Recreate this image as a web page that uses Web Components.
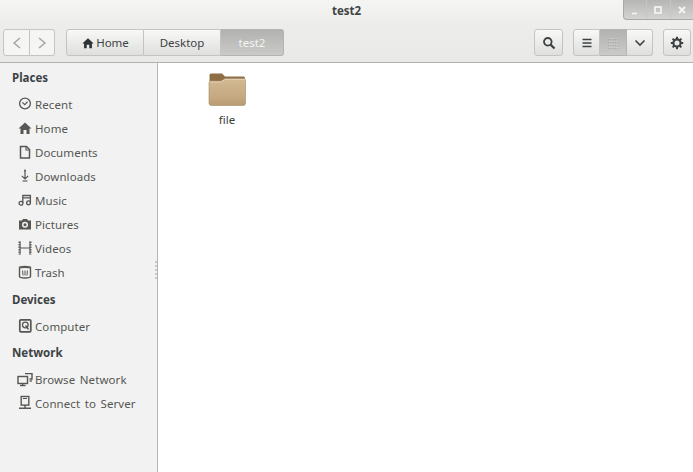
<!DOCTYPE html>
<html>
<head>
<meta charset="utf-8">
<title>test2</title>
<style>
html, body { margin: 0; padding: 0; height: 100%; background: #fff; }
body { font: 12px "Noto Sans", sans-serif; color: #2e3436; overflow: hidden; }
</style>
</head>
<body>
<files-window></files-window>
<script>
const ICONS = {
    recent: `<circle cx="8" cy="7.5" r="5.4" fill="none" stroke="currentColor" stroke-width="1.3"/><path d="M5.4 6.4 L7.8 8.6 L10.6 5.6" fill="none" stroke="currentColor" stroke-width="1.2"/>`,
    home: `<path d="M8 2.5 L14.5 8.5 H12.5 V14 H9.5 V10 H6.5 V14 H3.5 V8.5 H1.5 Z"/>`,
    documents: `<path d="M3.5 2.5 H9.5 L12.5 5.5 V14 H3.5 Z" fill="none" stroke="currentColor" stroke-width="1.5"/><path d="M9 2.5 V6 H12.5" fill="none" stroke="currentColor" stroke-width="1.1"/>`,
    downloads: `<path d="M8 3 V10 M4.8 7.8 L8 11 L11.2 7.8" fill="none" stroke="currentColor" stroke-width="1.2"/><path d="M5.5 13 H10.5" stroke="currentColor" stroke-width="1.1"/><circle cx="8" cy="2.4" r="1"/>`,
    music: `<path d="M5.8 11 V3.5 H13.4 V10.5 M5.8 5.8 H13.4" fill="none" stroke="currentColor" stroke-width="1.3"/><circle cx="4" cy="11.2" r="1.9" fill="none" stroke="currentColor" stroke-width="1.3"/><circle cx="11.5" cy="10.8" r="1.9" fill="none" stroke="currentColor" stroke-width="1.3"/>`,
    pictures: `<path fill-rule="evenodd" d="M2 4.5 H5 L6 3 H10 L11 4.5 H14 V13.5 H2 Z M8 5.8 A3 3 0 1 0 8 11.8 A3 3 0 1 0 8 5.8 Z"/><circle cx="8" cy="8.8" r="1.5"/>`,
    videos: `<path d="M3 1.5 V14.5 M13 1.5 V14.5 M3 8 H13" fill="none" stroke="currentColor" stroke-width="1.1"/><path d="M2.5 1.5 V14.5 M13.5 1.5 V14.5" stroke="currentColor" stroke-width="2.4" stroke-dasharray="1.5 1" opacity=".7"/>`,
    trash: `<path d="M2.5 4.6 C2.5 3 13.5 3 13.5 4.6 V12.5 C13.5 14.4 2.5 14.4 2.5 12.5 Z" fill="none" stroke="currentColor" stroke-width="1.4"/><path d="M2 3.6 C3 2 13 2 14 3.6" fill="none" stroke="currentColor" stroke-width="1.4"/><path d="M5.6 6.5 L6 11.5 M8 6.5 V11.5 M10.4 6.5 L10 11.5" stroke="currentColor" stroke-width="1"/>`,
    computer: `<rect x="2.8" y="1.8" width="11" height="12" rx="1" fill="none" stroke="currentColor" stroke-width="1.7"/><circle cx="8.3" cy="7" r="2.8" fill="none" stroke="currentColor" stroke-width="1.3"/><path d="M8.5 7.5 L11.5 11.5" stroke="currentColor" stroke-width="1.3"/>`,
    network: `<rect x="1" y="5.5" width="9.5" height="7" fill="none" stroke="currentColor" stroke-width="1.4"/><path d="M3 14.5 H8.5 M5.7 12.5 V14.5" stroke="currentColor" stroke-width="1.3"/><path d="M8 2.6 H15 V8 H12.5" fill="none" stroke="currentColor" stroke-width="1.4"/><path d="M12.5 10 H15" stroke="currentColor" stroke-width="1.3"/>`,
    server: `<rect x="4.2" y="1.5" width="7.6" height="8.6" fill="none" stroke="currentColor" stroke-width="1.4"/><path d="M8 10.1 V12.5 M2 13.2 H14" stroke="currentColor" stroke-width="1.4"/><path d="M6 3.5 H10" stroke="currentColor" stroke-width="1"/>`
};

class ToolButton extends HTMLElement {
    constructor() {
        super();
        this.attachShadow({ mode: "open" });
        this.shadowRoot.innerHTML = `
        <style>
            :host {
                display: flex;
                align-items: center;
                justify-content: center;
                box-sizing: border-box;
                height: 27px;
                width: var(--w, 28px);
                color: #3d4345;
                font: 11.5px "Noto Sans", sans-serif;
                background: linear-gradient(#f8f8f7, #dfdfdd);
                border: 1px solid #c4c4c1;
                border-left-width: var(--bl, 1px);
                border-radius: var(--r, 3px);
                gap: 1px;
            }
            :host([active]) {
                background: linear-gradient(#b2b3b0, #cacbc8);
                color: #f4f4f3;
                border-color: #b4b4b1;
            }
            :host([flat]) { background: #f5f5f4; color: #a3a5a5; }
        </style>
        <slot></slot>`;
    }
}

class NavItem extends HTMLElement {
    constructor() {
        super();
        this.attachShadow({ mode: "open" });
        const icon = ICONS[this.getAttribute("icon")] || "";
        this.shadowRoot.innerHTML = `
        <style>
            :host {
                display: flex;
                align-items: center;
                height: 24px;
                padding-left: 17px;
                gap: 2px;
                color: #555753;
                font: 11.5px "Noto Sans", sans-serif;
                letter-spacing: .08px;
                word-spacing: 1.5px;
            }
            svg { width: 16px; height: 16px; fill: currentColor; flex: none; }
        </style>
        <svg viewBox="0 0 16 16">${icon}</svg>
        <slot></slot>`;
    }
}

class NavHeading extends HTMLElement {
    constructor() {
        super();
        this.attachShadow({ mode: "open" });
        this.shadowRoot.innerHTML = `
        <style>
            :host {
                display: flex;
                align-items: center;
                height: 24px;
                padding-left: 12px;
                margin-bottom: 3px;
                color: #3d4345;
                font: 700 11.5px "Noto Sans", sans-serif;
            }
        </style>
        <slot></slot>`;
    }
}

class PlacesSidebar extends HTMLElement {
    constructor() {
        super();
        this.attachShadow({ mode: "open" });
        this.shadowRoot.innerHTML = `
        <style>
            :host {
                display: flex;
                flex-direction: column;
                position: relative;
                box-sizing: border-box;
                width: 158px;
                flex: none;
                padding-top: 2px;
                background: #f2f2f2;
                border-right: 1px solid #b6b6b3;
            }
            .devices { margin-top: 3px; }
            .network { margin-top: 2px; }
            .grip {
                position: absolute;
                right: 0;
                top: 198px;
                width: 2px;
                height: 20px;
                background: repeating-linear-gradient(#c9c9c7 0 2px, transparent 2px 4px);
            }
        </style>
        <nav-heading>Places</nav-heading>
        <nav-item icon="recent">Recent</nav-item>
        <nav-item icon="home">Home</nav-item>
        <nav-item icon="documents">Documents</nav-item>
        <nav-item icon="downloads">Downloads</nav-item>
        <nav-item icon="music">Music</nav-item>
        <nav-item icon="pictures">Pictures</nav-item>
        <nav-item icon="videos">Videos</nav-item>
        <nav-item icon="trash">Trash</nav-item>
        <nav-heading class="devices">Devices</nav-heading>
        <nav-item icon="computer">Computer</nav-item>
        <nav-heading class="network">Network</nav-heading>
        <nav-item icon="network">Browse Network</nav-item>
        <nav-item icon="server">Connect to Server</nav-item>
        <div class="grip"></div>`;
    }
}

class FileIcon extends HTMLElement {
    constructor() {
        super();
        this.attachShadow({ mode: "open" });
        this.shadowRoot.innerHTML = `
        <style>
            :host {
                display: flex;
                flex-direction: column;
                align-items: center;
                width: 100px;
                color: #3b3f40;
                font: 11.5px "Noto Sans", sans-serif;
            }
            svg { width: 38px; height: 34px; display: block; }
            .name { margin-top: 6px; line-height: 16px; }
        </style>
        <svg viewBox="0 0 38 34">
            <defs>
                <linearGradient id="front" x1="0" y1="0" x2="0" y2="1">
                    <stop offset="0" stop-color="#d2ba94"/>
                    <stop offset=".7" stop-color="#c4a880"/>
                    <stop offset="1" stop-color="#b89b72"/>
                </linearGradient>
            </defs>
            <path d="M1.5 32 V3 Q1.5 1.5 3 1.5 H14 L17 4.5 H35.5 Q37 4.5 37 6 V32 Z" fill="#8f6e46"/>
            <path d="M1 10.5 Q1 9 2.5 9 H13 L17 6.5 H35.5 Q37.5 6.5 37.5 8.5 V31 Q37.5 33.5 35 33.5 H3.5 Q1 33.5 1 31 Z" fill="url(#front)" stroke="#a58a63" stroke-width=".6"/>
            <path d="M1.5 10 H13 L17 7.4 H37" fill="none" stroke="#e6d7bc" stroke-width=".8"/>
        </svg>
        <div class="name"><slot></slot></div>`;
    }
}

class WindowControls extends HTMLElement {
    constructor() {
        super();
        this.attachShadow({ mode: "open" });
        this.shadowRoot.innerHTML = `
        <style>
            :host {
                position: absolute;
                top: 0;
                right: 0;
                width: 70px;
                height: 20px;
                display: flex;
                box-sizing: border-box;
                background: linear-gradient(#b5b5b3, #d4d4d2);
                border-bottom: 1px solid #a9a9a7;
                border-left: 1px solid #a9a9a7;
                border-radius: 0 0 0 4px;
            }
            div { flex: 1; display: flex; align-items: center; justify-content: center; border-right: 1px solid #c4c4c2; }
            div:last-child { border-right: 0; }
            svg { width: 10px; height: 10px; }
        </style>
        <div><svg viewBox="0 0 10 10"><path d="M2 8.5 H7" stroke="#f4f4f3" stroke-width="1.6"/></svg></div>
        <div><svg viewBox="0 0 10 10"><rect x="2" y="2" width="6" height="6" fill="none" stroke="#f4f4f3" stroke-width="1.7"/></svg></div>
        <div><svg viewBox="0 0 10 10"><path d="M2 2 L8 8 M8 2 L2 8" stroke="#f4f4f3" stroke-width="2"/></svg></div>`;
    }
}

class HeaderBar extends HTMLElement {
    constructor() {
        super();
        this.attachShadow({ mode: "open" });
        this.shadowRoot.innerHTML = `
        <style>
            :host {
                display: block;
                position: relative;
                box-sizing: border-box;
                height: 63px;
                flex: none;
                background: linear-gradient(#f5f5f4, #ededec 35%, #e9e9e8);
                border-bottom: 1px solid #b0b0ad;
            }
            .title {
                height: 29px;
                padding-bottom: 9px;
                box-sizing: border-box;
                display: flex;
                align-items: center;
                justify-content: center;
                font: 700 11.5px "Noto Sans", sans-serif;
                color: #3f4445;
            }
            .bar { display: flex; align-items: center; padding: 0 2px 0 3px; }
            .group { display: flex; }
            .group tool-button { --r: 0; --bl: 0; }
            .group tool-button:first-child { --r: 3px 0 0 3px; --bl: 1px; }
            .group tool-button:last-child { --r: 0 3px 3px 0; }
            .spacer { flex: 1; }
            svg { display: block; fill: currentColor; }
            .home-ic { width: 14px; height: 14px; color: #2e3436; }
        </style>
        <div class="title">test2</div>
        <window-controls></window-controls>
        <div class="bar">
            <div class="group" style="margin-right:11px">
                <tool-button flat style="--w:27px">
                    <svg width="12" height="14" viewBox="0 0 12 14"><path d="M9 2 L3 7 L9 12" fill="none" stroke="currentColor" stroke-width="1.5"/></svg>
                </tool-button>
                <tool-button flat style="--w:25px">
                    <svg width="12" height="14" viewBox="0 0 12 14"><path d="M3 2 L9 7 L3 12" fill="none" stroke="currentColor" stroke-width="1.5"/></svg>
                </tool-button>
            </div>
            <div class="group">
                <tool-button style="--w:78px">
                    <svg class="home-ic" viewBox="0 0 16 16">${ICONS.home}</svg>Home
                </tool-button>
                <tool-button style="--w:77px">Desktop</tool-button>
                <tool-button active style="--w:63px">test2</tool-button>
            </div>
            <div class="spacer"></div>
            <tool-button style="--w:29px;margin-right:10px">
                <svg width="14" height="14" viewBox="0 0 14 14"><circle cx="5.8" cy="5.8" r="3.8" fill="none" stroke="currentColor" stroke-width="1.8"/><path d="M8.6 8.6 L12.5 12.5" stroke="currentColor" stroke-width="2.2"/></svg>
            </tool-button>
            <div class="group" style="margin-right:10px">
                <tool-button style="--w:27px">
                    <svg width="12" height="12" viewBox="0 0 12 12"><path d="M1.5 2.5 H10.5 M1.5 6 H10.5 M1.5 9.5 H10.5" stroke="currentColor" stroke-width="1.6"/></svg>
                </tool-button>
                <tool-button active style="--w:27px;color:#8e908d">
                    <svg width="12" height="12" viewBox="0 0 12 12"><path d="M1 1.5 H11 M1 4.5 H11 M1 7.5 H11 M1 10.5 H11" stroke="#f2f2f0" stroke-width="1.2" stroke-dasharray="1.2 1.2"/><path d="M1 2 H11 M1 5 H11 M1 8 H11 M1 11 H11" stroke="#8e908d" stroke-width="1" stroke-dasharray="1 1.4"/></svg>
                </tool-button>
                <tool-button style="--w:26px">
                    <svg width="12" height="10" viewBox="0 0 12 10"><path d="M1.5 2.5 L6 7 L10.5 2.5" fill="none" stroke="currentColor" stroke-width="1.6"/></svg>
                </tool-button>
            </div>
            <tool-button style="--w:28px">
                <svg width="14" height="14" viewBox="0 0 14 14"><circle cx="7" cy="7" r="3.6" fill="none" stroke="currentColor" stroke-width="2.2"/><path d="M7 .8 V3 M7 11 V13.2 M.8 7 H3 M11 7 H13.2 M2.6 2.6 L4.2 4.2 M9.8 9.8 L11.4 11.4 M11.4 2.6 L9.8 4.2 M4.2 9.8 L2.6 11.4" stroke="currentColor" stroke-width="2"/></svg>
            </tool-button>
        </div>`;
    }
}

class FilesWindow extends HTMLElement {
    constructor() {
        super();
        this.attachShadow({ mode: "open" });
        this.shadowRoot.innerHTML = `
        <style>
            :host { display: flex; flex-direction: column; height: 100vh; }
            .body { display: flex; flex: 1; min-height: 0; }
            .view { flex: 1; background: #fff; padding: 9px 0 0 19px; }
        </style>
        <header-bar></header-bar>
        <div class="body">
            <places-sidebar></places-sidebar>
            <div class="view"><file-icon>file</file-icon></div>
        </div>`;
    }
}

customElements.define("tool-button", ToolButton);
customElements.define("nav-item", NavItem);
customElements.define("nav-heading", NavHeading);
customElements.define("places-sidebar", PlacesSidebar);
customElements.define("file-icon", FileIcon);
customElements.define("window-controls", WindowControls);
customElements.define("header-bar", HeaderBar);
customElements.define("files-window", FilesWindow);
</script>
</body>
</html>
